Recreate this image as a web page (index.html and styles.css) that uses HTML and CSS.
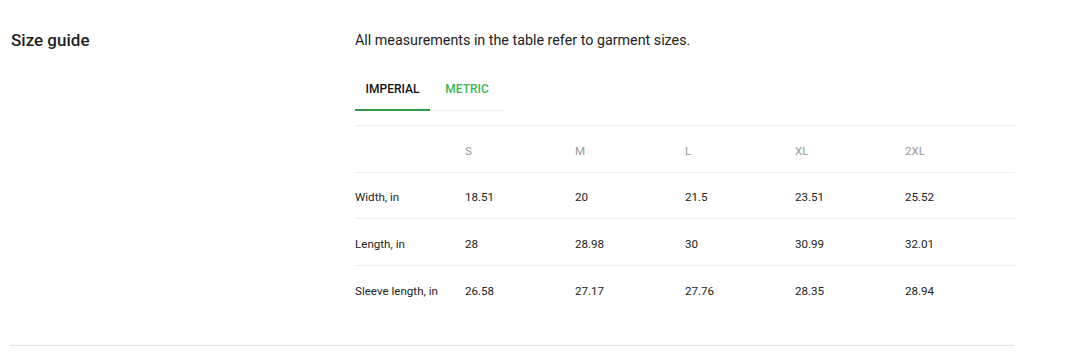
FILE: index.html
```html
<!DOCTYPE html>
<html>
<head>
<meta charset="utf-8">
<link rel="stylesheet" href="styles.css">
</head>
<body>
<section class="size-guide">
  <h2 class="title">Size guide</h2>
  <div class="content">
    <p class="desc">All measurements in the table refer to garment sizes.</p>
    <div class="tabs">
      <div class="tab tab-active">IMPERIAL</div>
      <div class="tab tab-metric">METRIC</div>
    </div>
    <table class="sizes">
      <thead>
        <tr><th></th><th>S</th><th>M</th><th>L</th><th>XL</th><th>2XL</th></tr>
      </thead>
      <tbody>
        <tr><td>Width, in</td><td>18.51</td><td>20</td><td>21.5</td><td>23.51</td><td>25.52</td></tr>
        <tr><td>Length, in</td><td>28</td><td>28.98</td><td>30</td><td>30.99</td><td>32.01</td></tr>
        <tr><td>Sleeve length, in</td><td>26.58</td><td>27.17</td><td>27.76</td><td>28.35</td><td>28.94</td></tr>
      </tbody>
    </table>
  </div>
</section>
</body>
</html>
```
FILE: styles.css
```css
* { box-sizing: border-box; }
html, body { margin: 0; padding: 0; background: #fff; }
body {
  font-family: Roboto, "Liberation Sans", Arial, sans-serif;
  color: #212121;
}
.size-guide {
  width: 1004px;
  margin-left: 10px;
  padding: 30px 0 33px;
  display: grid;
  grid-template-columns: 345px 659px;
  border-bottom: 1px solid #e6e6e6;
}
.title {
  margin: 0;
  padding-left: 1px;
  font-size: 17px;
  line-height: 21px;
  font-weight: 500;
  color: #1f1f1f;
}
.content { display: flex; flex-direction: column; }
.desc {
  margin: 0;
  font-size: 14.3px;
  line-height: 20px;
  color: #222;
}
.tabs {
  margin-top: 16px;
  display: flex;
  width: 149px;
  border-bottom: 1px solid #eeeeee;
}
.tab {
  height: 44px;
  padding-top: 1px;
  display: flex;
  align-items: center;
  justify-content: center;
  font-size: 12px;
  font-weight: 500;
  position: relative;
}
.tab-active { width: 75px; color: #111; }
.tab-active::after {
  content: "";
  position: absolute;
  left: 0; right: 0; bottom: -1px;
  height: 2px;
  background: #2f9a45;
}
.tab-metric { width: 74px; color: #3cb553; }
.sizes {
  margin-top: 14px;
  width: 659px;
  border-collapse: collapse;
  table-layout: fixed;
  font-size: 11.6px;
}
.sizes th, .sizes td {
  width: 110px;
  height: 46.5px;
  padding: 4px 0 0;
  text-align: left;
  vertical-align: middle;
  border-top: 1px solid #eeeeee;
}
.sizes th {
  font-weight: 400;
  color: #9a9a9a;
}
.sizes td { color: #222; }
```
